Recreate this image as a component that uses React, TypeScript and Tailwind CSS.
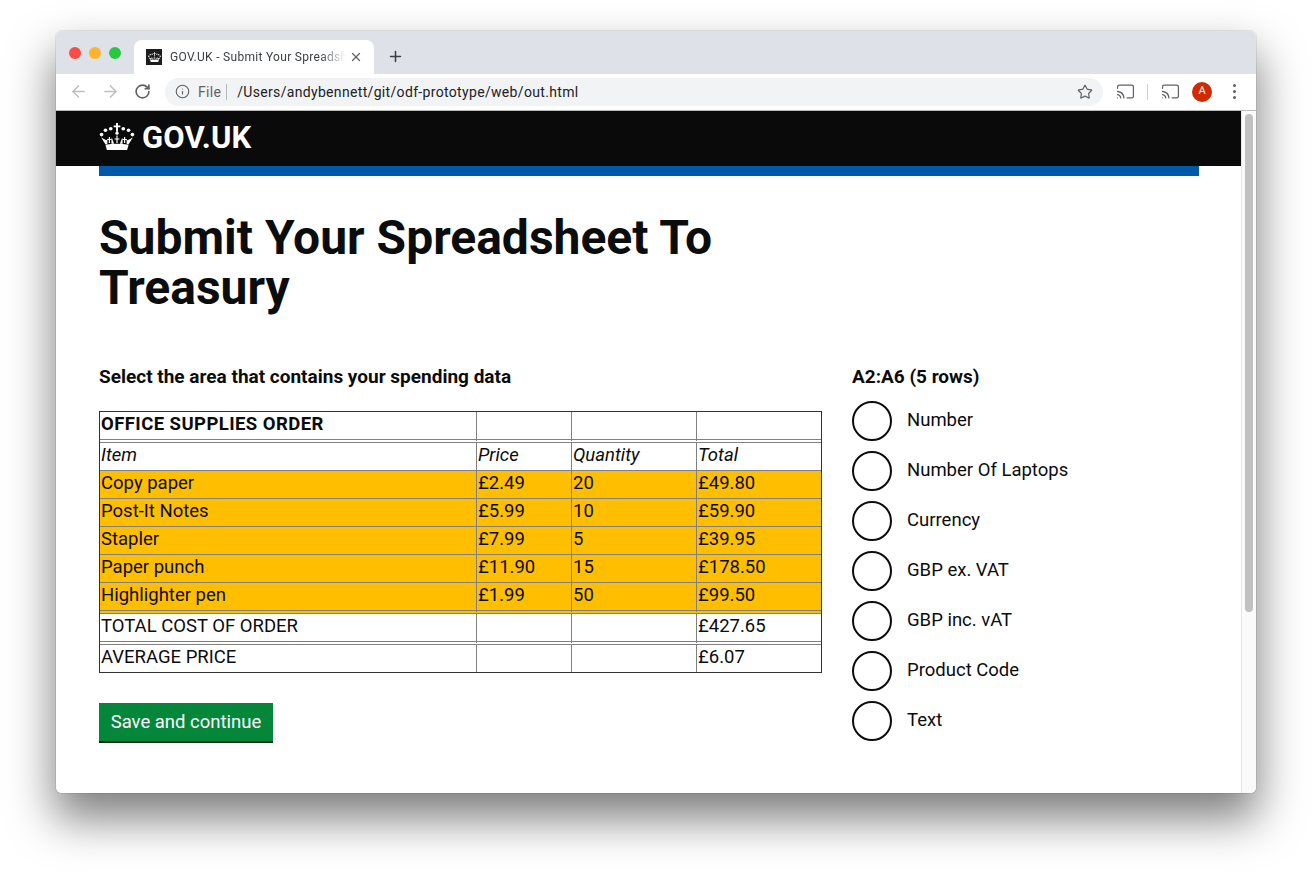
import { ArrowLeft, ArrowRight, Cast, Info, Plus, RotateCw, Star, X } from "lucide-react";

const FONT = "font-['Roboto',sans-serif]";

const rows = [
  { cells: ["OFFICE SUPPLIES ORDER", "", "", ""], row: "font-bold tracking-[0.43px]", cell: "h-[31px] border-b-[4px] border-double" },
  { cells: ["Item", "Price", "Quantity", "Total"], row: "italic", cell: "h-[28px] border-b" },
  { cells: ["Copy paper", "£2.49", "20", "£49.80"], row: "bg-[#ffbf00]", cell: "h-[28px] border-b" },
  { cells: ["Post-It Notes", "£5.99", "10", "£59.90"], row: "bg-[#ffbf00]", cell: "h-[28px] border-b" },
  { cells: ["Stapler", "£7.99", "5", "£39.95"], row: "bg-[#ffbf00]", cell: "h-[28px] border-b" },
  { cells: ["Paper punch", "£11.90", "15", "£178.50"], row: "bg-[#ffbf00]", cell: "h-[28px] border-b" },
  { cells: ["Highlighter pen", "£1.99", "50", "£99.50"], row: "bg-[#ffbf00]", cell: "h-[31px] border-b-[4px] border-double" },
  { cells: ["TOTAL COST OF ORDER", "", "", "£427.65"], row: "", cell: "h-[31px] border-b-[4px] border-double" },
  { cells: ["AVERAGE PRICE", "", "", "£6.07"], row: "", cell: "h-[27px]" },
];

const options = ["Number", "Number Of Laptops", "Currency", "GBP ex. VAT", "GBP inc. vAT", "Product Code", "Text"];

function Crown({ className }: { className: string }) {
  return (
    <svg viewBox="0 0 36 28" className={className} fill="#fff">
      <path d="M17 0h2v2.500h2.500v2H19V9h-2V4.500h-2.500v-2H17z" />
      <circle cx="18" cy="10.500" r="1.700" />
      <circle cx="2" cy="12" r="1.900" />
      <circle cx="6" cy="7.500" r="1.900" />
      <circle cx="11.500" cy="6" r="1.900" />
      <circle cx="24.500" cy="6" r="1.900" />
      <circle cx="30" cy="7.500" r="1.900" />
      <circle cx="34" cy="12" r="1.900" />
      <path d="M9.500 14.500h1.200v2h1.800v1.200h-1.800v3h-1.200v-3H7.700v-1.200h1.800zM17.400 13h1.200v3h1.900v1.200h-1.900v3.500h-1.200v-3.500h-1.900V16h1.900zM25.300 14.500h1.200v2h1.800v1.200h-1.800v3h-1.200v-3h-1.800v-1.200h1.800z" />
      <path d="M1.500 15 6 22h2v-5l-1 .8zM34.500 15 30 22h-2v-5l1 .8zM12.500 15l2.500 6.500h-2.800v-2.500zM23.500 15 21 21.500h2.800V19z" />
      <path d="M6 22.500c7.500-1.300 16.500-1.300 24 0l-1.500 5.500h-21z" />
    </svg>
  );
}

function CastIcon() {
  return <Cast size={19} strokeWidth={1.600} className="text-[#5f6368]" />;
}

function Tabs() {
  return (
    <div className="flex h-[43px] items-end bg-[#dee1e7] pl-[13px]">
      <div className="flex h-[34px] items-center gap-2 self-center">
        <span className="h-3 w-3 rounded-full bg-[#fc4c48]" />
        <span className="h-3 w-3 rounded-full bg-[#fdb52c]" />
        <span className="h-3 w-3 rounded-full bg-[#29c93f]" />
      </div>
      <div className="ml-[13px] flex h-[34px] w-[240px] items-center rounded-t-lg bg-white pl-[12px] pr-[11px]">
        <span className="flex h-4 w-4 shrink-0 items-center justify-center bg-[#1d1d1d]">
          <Crown className="h-[10px] w-[13px]" />
        </span>
        <span className="ml-2 w-[176px] overflow-hidden whitespace-nowrap text-[12px] tracking-[0.3px] text-[#3c4043] [mask-image:linear-gradient(to_right,black_85%,transparent)]">
          GOV.UK - Submit Your Spreadsheet
        </span>
        <X size={14} strokeWidth={2.200} className="ml-auto text-[#5f6368]" />
      </div>
      <Plus size={17} strokeWidth={2.200} className="mb-[9px] ml-[13px] text-[#3c4043]" />
    </div>
  );
}

function Toolbar() {
  return (
    <div className="flex h-[37px] items-center border-b border-[#b9b9b9] bg-white pb-px pl-[13px]">
      <ArrowLeft size={19} strokeWidth={2} className="text-[#bcbfc4]" />
      <ArrowRight size={19} strokeWidth={2} className="ml-[13px] text-[#bcbfc4]" />
      <RotateCw size={17} strokeWidth={2.400} className="ml-[14px] text-[#5f6368]" />
      <div className="ml-[14px] flex h-[28px] w-[938px] items-center rounded-full bg-[#f1f3f4] pl-[10px] pr-[10px]">
        <Info size={15} strokeWidth={1.800} className="text-[#5f6368]" />
        <span className="ml-[8px] pt-px text-[14px] tracking-[0.3px] text-[#5f6368]">File</span>
        <span className="ml-[5px] h-[16px] w-px bg-[#b6b9bd]" />
        <span className="ml-[10px] pt-px text-[14px] tracking-[0.33px] text-[#202124]">/Users/andybennett/git/odf-prototype/web/out.html</span>
        <Star size={16} strokeWidth={1.800} className="ml-auto text-[#5f6368]" />
      </div>
      <div className="ml-[13px]"><CastIcon /></div>
      <span className="ml-[12px] h-[16px] w-px bg-[#d0d2d5]" />
      <div className="ml-[13px]"><CastIcon /></div>
      <span className="ml-[12px] flex h-5 w-5 items-center justify-center rounded-full bg-[#cf2a00] text-[11px] text-white">A</span>
      <div className="ml-[21px] flex flex-col gap-[3px]">
        <span className="h-[3px] w-[3px] rounded-full bg-[#5f6368]" />
        <span className="h-[3px] w-[3px] rounded-full bg-[#5f6368]" />
        <span className="h-[3px] w-[3px] rounded-full bg-[#5f6368]" />
      </div>
    </div>
  );
}

function SheetTable() {
  return (
    <table className="mt-[22px] w-[723px] table-fixed border-separate border-spacing-0 border border-[#333] text-[18.500px] leading-[22px] text-[#0b0c0c]">
      <colgroup>
        <col className="w-[376px]" />
        <col className="w-[95px]" />
        <col className="w-[125px]" />
        <col className="w-[125px]" />
      </colgroup>
      <tbody>
        {rows.map((r, i) => (
          <tr key={i} className={r.row}>
            {r.cells.map((c, j) => (
              <td key={j} className={`${r.cell} border-l border-[#808080] px-px pt-0 pb-[4px] align-middle first:border-l-0`}>
                {c}
              </td>
            ))}
          </tr>
        ))}
      </tbody>
    </table>
  );
}

export default function App() {
  return (
    <div className={`h-[873px] w-[1312px] overflow-hidden bg-white pl-[56px] pt-[31px] ${FONT}`}>
      <div className="flex h-[762px] w-[1200px] flex-col overflow-hidden rounded-[6px] shadow-[0_24px_45px_2px_rgba(0,0,0,0.5),0_0_0_1px_rgba(0,0,0,0.08)]">
        <Tabs />
        <Toolbar />
        <div className="flex min-h-0 flex-1 bg-white">
          <div className="min-w-0 flex-1">
            <div className="h-[55px] bg-[#0a0a0a] pl-[43px]">
              <div className="flex h-full items-center gap-[7px] pb-[2px]">
                <Crown className="mb-[2px] h-[27px] w-[36px]" />
                <span className="text-[31px] leading-none font-bold tracking-[0.2px] text-white">GOV.UK</span>
              </div>
            </div>
            <div className="ml-[43px] mr-[42px] h-[10px] bg-[#0059a8]" />
            <div className="px-[43px] pt-[37px]">
              <h1 className="w-[700px] text-[48px] leading-[50px] font-bold text-[#0b0c0c]">Submit Your Spreadsheet To Treasury</h1>
              <div className="mt-[51px] flex">
                <div className="w-[753px]">
                  <p className="text-[19px] leading-[25px] font-bold text-[#0b0c0c]">Select the area that contains your spending data</p>
                  <SheetTable />
                  <button className="mt-[30px] block h-[40px] w-[174px] border-b-2 border-[#002d18] bg-[#04873a] pt-px text-[18.500px] text-white">Save and continue</button>
                </div>
                <div>
                  <p className="text-[19px] leading-[25px] font-bold text-[#0b0c0c]">A2:A6 (5 rows)</p>
                  <div className="mt-[12px] flex flex-col gap-[10px]">
                    {options.map((o) => (
                      <label key={o} className="flex items-center gap-[15px]">
                        <span className="h-10 w-10 rounded-full border-2 border-[#0b0c0c]" />
                        <span className="text-[18.500px] text-[#0b0c0c]">{o}</span>
                      </label>
                    ))}
                  </div>
                </div>
              </div>
            </div>
          </div>
          <div className="w-[15px] border-l border-[#e6e6e6] bg-[#fafafa] px-[3px] pt-[3px]">
            <div className="h-[498px] rounded-full bg-[#c1c1c1]" />
          </div>
        </div>
      </div>
    </div>
  );
}
